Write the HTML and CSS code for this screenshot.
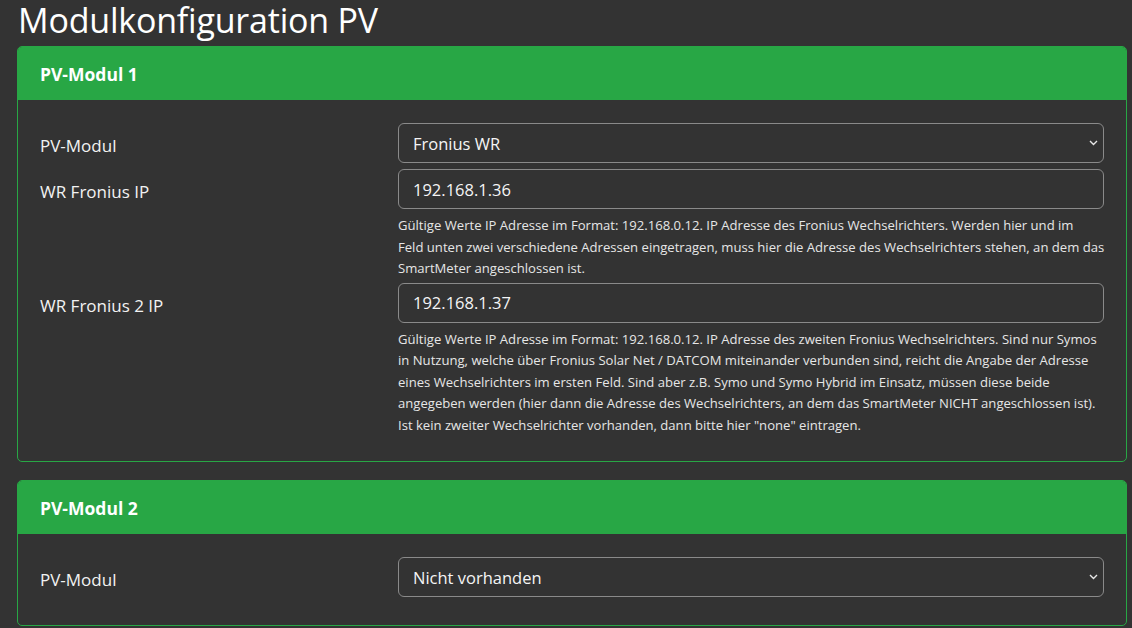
FILE: index.html
```html
<!DOCTYPE html>
<html lang="de">
<head>
    <meta charset="UTF-8">
    <meta name="viewport" content="width=device-width, initial-scale=1.0">
    <title>Modulkonfiguration PV</title>

    <link rel="stylesheet" href="styles.css">
</head>
<body>
    <h1 class="page-title">Modulkonfiguration PV</h1>

    <!-- PV-Modul 1 -->
    <section class="card">
        <div class="card-header">PV-Modul 1</div>
        <div class="card-body">
            <div class="form-row">
                <label for="pvmodul1">PV-Modul</label>
                <div class="field select-wrap">
                    <select id="pvmodul1" class="form-control">
                        <option>Fronius WR</option>
                        <option>Nicht vorhanden</option>
                    </select>
                    <svg class="chevron" width="9" height="6" viewBox="0 0 9 6"><path d="M1 1l3.5 3.5L8 1" fill="none" stroke="#e8e8e8" stroke-width="1.4"/></svg>
                </div>
            </div>

            <div class="form-row">
                <label for="wrfroniusip">WR Fronius IP</label>
                <div class="field">
                    <input type="text" id="wrfroniusip" class="form-control" value="192.168.1.36">
                    <span class="help">Gültige Werte IP Adresse im Format: 192.168.0.12. IP Adresse des Fronius Wechselrichters. Werden hier und im<br>Feld unten zwei verschiedene Adressen eingetragen, muss hier die Adresse des Wechselrichters stehen, an dem das<br>SmartMeter angeschlossen ist.</span>
                </div>
            </div>

            <div class="form-row">
                <label for="wrfronius2ip">WR Fronius 2 IP</label>
                <div class="field">
                    <input type="text" id="wrfronius2ip" class="form-control" value="192.168.1.37">
                    <span class="help">Gültige Werte IP Adresse im Format: 192.168.0.12. IP Adresse des zweiten Fronius Wechselrichters. Sind nur Symos<br>in Nutzung, welche über Fronius Solar Net / DATCOM miteinander verbunden sind, reicht die Angabe der Adresse<br>eines Wechselrichters im ersten Feld. Sind aber z.B. Symo und Symo Hybrid im Einsatz, müssen diese beide<br>angegeben werden (hier dann die Adresse des Wechselrichters, an dem das SmartMeter NICHT angeschlossen ist).<br>Ist kein zweiter Wechselrichter vorhanden, dann bitte hier "none" eintragen.</span>
                </div>
            </div>
        </div>
    </section>

    <!-- PV-Modul 2 -->
    <section class="card">
        <div class="card-header">PV-Modul 2</div>
        <div class="card-body">
            <div class="form-row">
                <label for="pvmodul2">PV-Modul</label>
                <div class="field select-wrap">
                    <select id="pvmodul2" class="form-control">
                        <option>Nicht vorhanden</option>
                        <option>Fronius WR</option>
                    </select>
                    <svg class="chevron" width="9" height="6" viewBox="0 0 9 6"><path d="M1 1l3.5 3.5L8 1" fill="none" stroke="#e8e8e8" stroke-width="1.4"/></svg>
                </div>
            </div>
        </div>
    </section>
</body>
</html>
```

FILE: styles.css
```css
* {
    font-family: "Open Sans", "Noto Sans", Arial, sans-serif;
    margin: 0;
    padding: 0;
    box-sizing: border-box;
}

body {
    background-color: #333333;
    color: #f5f5f5;
    padding: 0 5px 0 17px;
}

.page-title {
    font-size: 34px;
    font-weight: 400;
    line-height: 41px;
    margin-bottom: 5px;
    padding-left: 1px;
    letter-spacing: -0.2px;
    color: #ffffff;
}

/* Cards */
.card {
    border: 1px solid #28a745;
    border-radius: 5px;
    margin-bottom: 18px;
    overflow: hidden;
}

.card-header {
    background-color: #28a745;
    color: #ffffff;
    font-weight: 700;
    font-size: 17.5px;
    height: 53px;
    line-height: 54px;
    padding: 0 22px;
}

.card-body {
    padding: 23px 22px 28px;
    display: flex;
    flex-direction: column;
    gap: 6px;
}

/* Form rows */
.form-row {
    display: grid;
    grid-template-columns: 348px 1fr;
    column-gap: 10px;
}

.form-row label {
    font-size: 17px;
    height: 40px;
    padding-top: 3px;
    line-height: 40px;
    color: #f2f2f2;
}

.form-control {
    width: 100%;
    height: 40px;
    padding: 0 14px;
    font-size: 16.5px;
    color: #f5f5f5;
    background-color: #333333;
    border: 1px solid #8a8a8a;
    border-radius: 6px;
    outline: none;
}

.select-wrap {
    position: relative;
}

.select-wrap select {
    appearance: none;
    -webkit-appearance: none;
}

.chevron {
    position: absolute;
    right: 6px;
    top: 17px;
    pointer-events: none;
}

.help {
    display: block;
    margin-top: 6px;
    margin-bottom: -3px;
    font-size: 13.1px;
    line-height: 21.5px;
    color: #e6e6e6;
    white-space: nowrap;
}
```
